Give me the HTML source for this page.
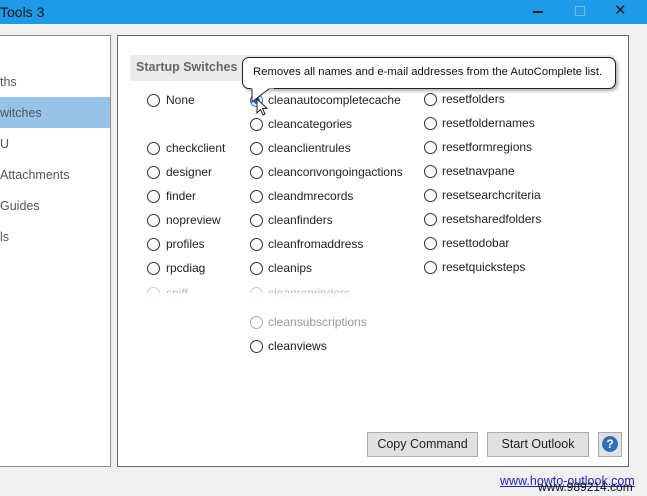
<!DOCTYPE html>
<html><head><meta charset="utf-8"><style>
*{margin:0;padding:0;box-sizing:border-box}
body{width:647px;height:496px;overflow:hidden;background:#f0f0f0;font-family:"Liberation Sans",sans-serif;font-size:12px;color:#222;position:relative}
.a{position:absolute;white-space:nowrap}
.r{position:absolute;width:13px;height:13px;border:1px solid #333;border-radius:50%;background:#fff}
.t{position:absolute;line-height:14px;white-space:nowrap}
.ln{position:absolute;left:0;line-height:14px;color:#555;font-size:12.5px}
.btn{position:absolute;height:25px;border:1px solid #adadad;background:#e1e1e1;text-align:center;line-height:23px;font-size:12.5px}
</style></head><body>
<div class="a" style="left:0;top:0;width:647px;height:24px;background:#1d9be8"></div>
<div class="a" style="left:0;top:4px;font-size:14px;color:#111">Tools 3</div>
<div class="a" style="left:533px;top:11px;width:10px;height:1.5px;background:#222"></div>
<div class="a" style="left:575px;top:6px;width:10px;height:10px;border:1px solid #7fb6dd"></div>
<div class="a" style="left:614px;top:1px;font-size:15px;color:#222">✕</div>

<div class="a" style="left:-2px;top:35px;width:113px;height:432px;background:#fff;border:1px solid #8a8a8a"></div>
<div class="a" style="left:0;top:97px;width:110px;height:31px;background:#96c3e8"></div>
<div class="ln" style="top:75px">ths</div>
<div class="ln" style="top:106px">witches</div>
<div class="ln" style="top:137px">U</div>
<div class="ln" style="top:168px">Attachments</div>
<div class="ln" style="top:199px">Guides</div>
<div class="ln" style="top:230px">ls</div>

<div class="a" style="left:117px;top:35px;width:512px;height:432px;background:#fff;border:1px solid #666"></div>
<div class="a" style="left:130px;top:55px;width:484px;height:26px;background:#ebebeb"></div>
<div class="a" style="left:136px;top:60px;font-weight:bold;color:#666;font-size:12.5px">Startup Switches</div>

<div class="r" style="left:147px;top:94px"></div><div class="t" style="left:166px;top:93px">None</div>
<div class="r" style="left:147px;top:142px"></div><div class="t" style="left:166px;top:141px">checkclient</div>
<div class="r" style="left:147px;top:166px"></div><div class="t" style="left:166px;top:165px">designer</div>
<div class="r" style="left:147px;top:190px"></div><div class="t" style="left:166px;top:189px">finder</div>
<div class="r" style="left:147px;top:214px"></div><div class="t" style="left:166px;top:213px">nopreview</div>
<div class="r" style="left:147px;top:238px"></div><div class="t" style="left:166px;top:237px">profiles</div>
<div class="r" style="left:147px;top:262px"></div><div class="t" style="left:166px;top:261px">rpcdiag</div>
<div class="r" style="left:147px;top:287px;border-color:#ccc"></div><div class="t" style="left:166px;top:286px;color:#bbb">sniff</div>

<div class="r" style="left:250px;top:94px;border-color:#1a6fd0"><div style="position:absolute;left:2px;top:2px;width:7px;height:7px;border-radius:50%;background:#1a6fd0"></div></div>
<div class="t" style="left:268px;top:93px">cleanautocompletecache</div>
<div class="r" style="left:250px;top:118px"></div><div class="t" style="left:268px;top:117px">cleancategories</div>
<div class="r" style="left:250px;top:142px"></div><div class="t" style="left:268px;top:141px">cleanclientrules</div>
<div class="r" style="left:250px;top:166px"></div><div class="t" style="left:268px;top:165px">cleanconvongoingactions</div>
<div class="r" style="left:250px;top:190px"></div><div class="t" style="left:268px;top:189px">cleandmrecords</div>
<div class="r" style="left:250px;top:214px"></div><div class="t" style="left:268px;top:213px">cleanfinders</div>
<div class="r" style="left:250px;top:238px"></div><div class="t" style="left:268px;top:237px">cleanfromaddress</div>
<div class="r" style="left:250px;top:262px"></div><div class="t" style="left:268px;top:261px">cleanips</div>
<div class="r" style="left:250px;top:287px;border-color:#ccc"></div><div class="t" style="left:268px;top:286px;color:#bbb">cleanreminders</div>
<div class="a" style="left:140px;top:293px;width:300px;height:14px;background:rgba(255,255,255,0.85)"></div>
<div class="r" style="left:250px;top:316px;border-color:#aaa"></div><div class="t" style="left:268px;top:315px;color:#999">cleansubscriptions</div>
<div class="r" style="left:250px;top:340px"></div><div class="t" style="left:268px;top:339px">cleanviews</div>

<div class="r" style="left:424px;top:93px"></div><div class="t" style="left:442px;top:92px">resetfolders</div>
<div class="r" style="left:424px;top:117px"></div><div class="t" style="left:442px;top:116px">resetfoldernames</div>
<div class="r" style="left:424px;top:141px"></div><div class="t" style="left:442px;top:140px">resetformregions</div>
<div class="r" style="left:424px;top:165px"></div><div class="t" style="left:442px;top:164px">resetnavpane</div>
<div class="r" style="left:424px;top:189px"></div><div class="t" style="left:442px;top:188px">resetsearchcriteria</div>
<div class="r" style="left:424px;top:213px"></div><div class="t" style="left:442px;top:212px">resetsharedfolders</div>
<div class="r" style="left:424px;top:237px"></div><div class="t" style="left:442px;top:236px">resettodobar</div>
<div class="r" style="left:424px;top:261px"></div><div class="t" style="left:442px;top:260px">resetquicksteps</div>

<div class="a" style="left:242px;top:57px;width:374px;height:32px;background:#fff;border:1px solid #222;border-radius:7px;box-shadow:2px 2px 3px rgba(0,0,0,0.3)"></div>
<svg class="a" style="left:250px;top:86px" width="30" height="20"><path d="M2 2 L2 16 L20 2" fill="#fff" stroke="#222" stroke-width="1"/><path d="M1 1 L24 1" stroke="#fff" stroke-width="3"/></svg>
<div class="a" style="left:253px;top:66px;font-size:11.3px;color:#111">Removes all names and e-mail addresses from the AutoComplete list.</div>
<svg class="a" style="left:256px;top:98px" width="14" height="20"><path d="M1 1 L1 15 L4.5 11.5 L7 17 L9 16 L6.5 10.5 L11 10.5 Z" fill="#fff" stroke="#222" stroke-width="1"/></svg>

<div class="btn" style="left:367px;top:432px;width:111px">Copy Command</div>
<div class="btn" style="left:487px;top:432px;width:102px">Start Outlook</div>
<div class="a" style="left:598px;top:432px;width:24px;height:25px;border:1px solid #adadad;background:#e1e1e1"></div>
<div class="a" style="left:602px;top:436px;width:16px;height:16px;border-radius:50%;background:#2f6fb8;color:#fff;font-weight:bold;font-size:12px;text-align:center;line-height:16px">?</div>
<div class="a" style="left:500px;top:474px;color:#2020d0;text-decoration:underline;font-size:12.5px">www.howto-outlook.com</div>
<div class="a" style="left:538px;top:480px;color:#111;font-size:12px">www.989214.com</div>
</body></html>
